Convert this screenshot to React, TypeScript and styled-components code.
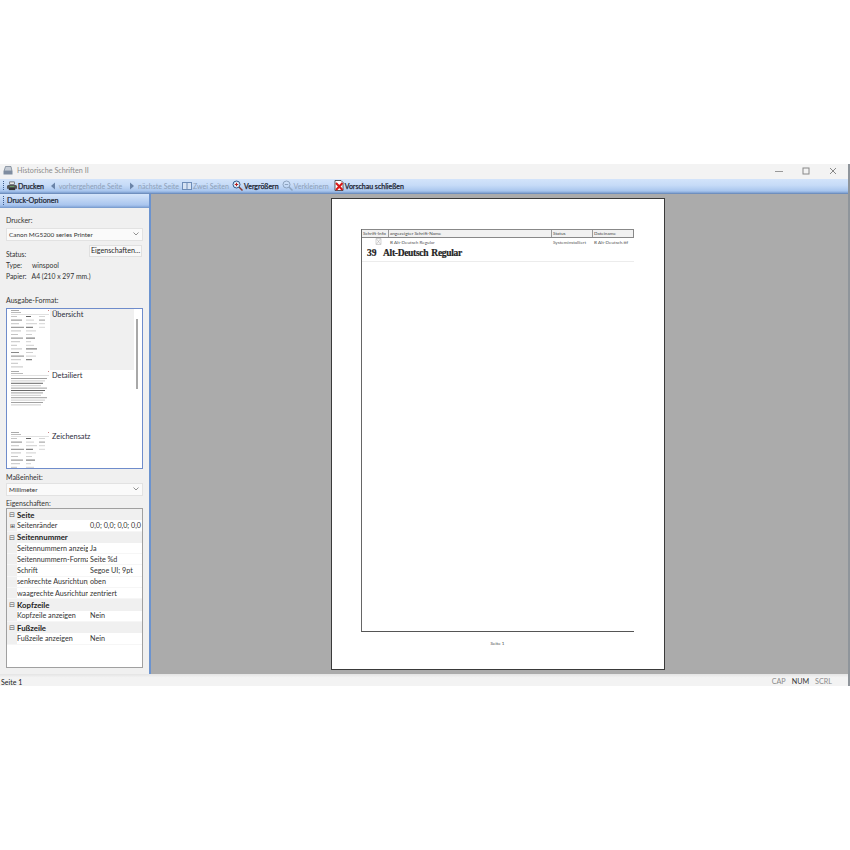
import { createGlobalStyle } from 'styled-components';
import styled from 'styled-components';

const GlobalStyle = createGlobalStyle`
  html, body {
    margin: 0;
    padding: 0;
    background: #fff;
  }
  body {
    font-family: Lato, 'Noto Sans', 'Liberation Sans', sans-serif;
    font-size: 7.2px;
    color: #2a2a2a;
  }
`;

const Page = styled.div`
  width: 850px;
  height: 850px;
  padding-top: 164px;
  box-sizing: border-box;
  background: #fff;
`;

const Window = styled.div`
  width: 850px;
  height: 522px;
  display: flex;
  flex-direction: column;
  border-right: 2px solid #8f959b;
  box-sizing: border-box;
  background: #f0f0f0;
`;

const TitleBar = styled.div`
  height: 15px;
  display: flex;
  align-items: center;
  padding: 0 2px 2px 3px;
  box-sizing: border-box;
  background: #f3f3f3;
  color: #8c8c8c;
  font-size: 7.2px;
`;

const TitleText = styled.span`
  margin-left: 4px;
  flex: 1;
`;

const WindowButton = styled.span`
  width: 27px;
  height: 13px;
  display: flex;
  align-items: center;
  justify-content: center;
`;

const Toolbar = styled.div`
  height: 15px;
  display: flex;
  align-items: center;
  padding: 0 0 0 3px;
  box-sizing: border-box;
  background: linear-gradient(#d3e4fa 0%, #c6dbf7 45%, #a9c6ee 85%, #7d9fd0 100%);
  border-bottom: 1px solid #6f8fbe;
`;

const Gripper = styled.span`
  width: 1px;
  height: 10px;
  margin-right: 3px;
  background: repeating-linear-gradient(#3f5f8f 0 1px, transparent 1px 2px);
  flex: none;
`;

const ToolButton = styled.span<{ $disabled?: boolean; $gap?: number }>`
  display: inline-flex;
  align-items: center;
  gap: 1px;
  margin-right: ${({ $gap }) => $gap ?? 3}px;
  color: ${({ $disabled }) => ($disabled ? '#8d9fb8' : '#1c2430')};
  font-size: 7px;
  -webkit-text-stroke: ${({ $disabled }) => ($disabled ? '0' : '0.25px')};
  white-space: nowrap;
`;

const Main = styled.div`
  height: 481px;
  display: flex;
`;

const Sidebar = styled.div`
  width: 149px;
  flex: none;
  display: flex;
  flex-direction: column;
  border-right: 2px solid #6b93cf;
  box-sizing: content-box;
`;

const SidebarHeader = styled.div`
  height: 14px;
  display: flex;
  align-items: center;
  padding: 1px 0 0 3px;
  box-sizing: border-box;
  background: linear-gradient(#d5e5fa, #a9c5ee 85%, #86a8da);
  border-bottom: 1px solid #7d9fd0;
  font-size: 7.2px;
  color: #1c2430;
  -webkit-text-stroke: 0.2px;
`;

const SidebarBody = styled.div`
  flex: 1;
  padding: 0 6px;
  display: flex;
  flex-direction: column;
  background: #f0f0f0;
`;

const FieldLabel = styled.div<{ $top: number }>`
  margin-top: ${({ $top }) => $top}px;
  height: 10px;
  line-height: 10px;
  font-size: 7px;
  color: #333;
`;

const Select = styled.div<{ $top: number }>`
  margin-top: ${({ $top }) => $top}px;
  height: 13px;
  display: flex;
  align-items: center;
  justify-content: space-between;
  padding: 0 3px 0 2px;
  background: #fafafa;
  border: 1px solid #e2e2e2;
  box-sizing: border-box;
  font-size: 6.4px;
  color: #333;
`;

const StatusBlock = styled.div`
  position: relative;
  height: 37px;
  margin-top: 3px;
`;

const PropertiesButton = styled.div`
  position: absolute;
  right: 1px;
  top: 1px;
  width: 53px;
  height: 12px;
  display: flex;
  align-items: center;
  justify-content: center;
  background: #f8f8f8;
  border: 1px solid #e0e0e0;
  box-sizing: border-box;
  font-size: 7.2px;
  white-space: nowrap;
`;

const InfoRow = styled.div<{ $top: number }>`
  position: absolute;
  left: 0;
  top: ${({ $top }) => $top}px;
  font-size: 6.8px;
  line-height: 10px;
  color: #333;
  white-space: nowrap;
`;

const InfoValue = styled.span`
  margin-left: 10px;
`;

const ListBox = styled.div`
  position: relative;
  height: 161px;
  margin-top: 3px;
  overflow: hidden;
  background: #fff;
  border: 1px solid #6f8ccb;
  box-sizing: border-box;
`;

const ListItem = styled.div`
  height: 61px;
  display: flex;
  align-items: flex-start;
  padding-left: 3px;
`;

const ListCaption = styled.div<{ $selected?: boolean }>`
  flex: 1;
  height: 100%;
  margin-right: 8px;
  padding-left: 2px;
  font-size: 7.4px;
  line-height: 12px;
  color: #2b2b3a;
  background: ${({ $selected }) => ($selected ? '#f0f0f0' : '#fff')};
`;

const ScrollThumb = styled.div`
  position: absolute;
  right: 4px;
  top: 10px;
  width: 2px;
  height: 70px;
  background: #a8a8a8;
`;

const PropertyGrid = styled.div`
  height: 160px;
  background: #fff;
  border: 1px solid #a0a0a0;
  box-sizing: border-box;
`;

const GroupRow = styled.div`
  height: 11.3px;
  display: flex;
  align-items: center;
  background: #f0f0f0;
  font-size: 7.8px;
  font-weight: 700;
  color: #222;
`;

const Toggle = styled.span`
  width: 10px;
  flex: none;
  text-align: center;
  font-size: 7px;
  font-weight: 400;
  line-height: 1;
  color: #555;
`;

const PropRow = styled.div`
  height: 11.3px;
  display: flex;
  align-items: center;
  font-size: 7.2px;
  color: #333;
  border-bottom: 1px solid #f6f6f6;
  box-sizing: border-box;
`;

const PropGutter = styled.span`
  width: 10px;
  height: 100%;
  flex: none;
  display: flex;
  align-items: center;
  justify-content: center;
  background: #f0f0f0;
  font-size: 6px;
`;

const PropName = styled.span`
  width: 71px;
  margin-right: 2px;
  flex: none;
  overflow: hidden;
  white-space: nowrap;
`;

const PropValue = styled.span`
  white-space: nowrap;
`;

const Preview = styled.div`
  flex: 1;
  display: flex;
  align-items: flex-start;
  padding: 4px 0 0 180px;
  background: #ababab;
`;

const Paper = styled.div`
  width: 334px;
  height: 472px;
  display: flex;
  flex-direction: column;
  padding: 30px 30px 0 29px;
  background: #fff;
  border: 1px solid #3a3a3a;
  box-sizing: border-box;
`;

const ReportFrame = styled.div`
  height: 403px;
  border-left: 1px solid #666;
  border-bottom: 1px solid #555;
  box-sizing: border-box;
`;

const ReportHead = styled.div`
  height: 9px;
  display: grid;
  grid-template-columns: 27px 163px 41px 42px;
  background: #f1f1f1;
  border: 1px solid #888;
  border-left: 0;
  box-sizing: border-box;
  font-size: 4.6px;
  line-height: 7px;
  color: #444;
`;

const HeadCell = styled.span`
  padding-left: 1px;
  border-right: 1px solid #999;
  white-space: nowrap;
  overflow: hidden;
  &:last-child {
    border-right: 0;
  }
`;

const ReportRow = styled.div`
  height: 8px;
  display: grid;
  grid-template-columns: 27px 163px 41px 42px;
  font-size: 4.6px;
  line-height: 8px;
  color: #555;
`;

const RowCell = styled.span`
  padding-left: 1px;
  white-space: nowrap;
  overflow: hidden;
`;

const IconCell = styled.span`
  display: flex;
  justify-content: flex-end;
  align-items: center;
  padding-right: 7px;
`;

const FontSample = styled.div`
  height: 15px;
  display: flex;
  align-items: center;
  padding-left: 5px;
  border-bottom: 1px solid #ececec;
  font-family: 'Liberation Serif', serif;
  font-weight: 700;
  font-size: 9.5px;
  color: #222;
  -webkit-text-stroke: 0.2px;
`;

const SampleNumber = styled.span`
  width: 16px;
  flex: none;
`;

const SampleName = styled.span`
  word-spacing: 1px;
  letter-spacing: -0.3px;
`;

const PageFooter = styled.div`
  margin-top: 7px;
  text-align: center;
  font-size: 4.6px;
  line-height: 8px;
  color: #444;
`;

const StatusBar = styled.div`
  flex: 1;
  display: flex;
  align-items: center;
  padding: 3px 16px 0 1px;
  background: linear-gradient(#e4e4e4, #f3f3f3 30%);
  font-size: 7px;
  color: #222;
`;

const StatusLabel = styled.span`
  flex: 1;
`;

const Indicator = styled.span<{ $on?: boolean }>`
  margin-left: 6px;
  font-size: 7.2px;
  color: ${({ $on }) => ($on ? '#333' : '#8a8a8a')};
`;

function PrinterIcon() {
  return (
    <svg width="10" height="10" viewBox="0 0 11 10">
      <rect x="3" y="0.5" width="5" height="3" fill="#e8e8e8" stroke="#444" strokeWidth="0.7" />
      <path d="M1 4 h9 l1 1 v3 h-11 v-3 z" fill="#555" />
      <rect x="2" y="7" width="7" height="2.5" fill="#333" />
      <rect x="3" y="5" width="5" height="1" fill="#6aa56a" />
    </svg>
  );
}

function Arrow({ left }: { left?: boolean }) {
  return (
    <svg width="6" height="8" viewBox="0 0 6 8">
      <path d={left ? 'M5 0.5 L1 4 L5 7.5 Z' : 'M1 0.5 L5 4 L1 7.5 Z'} fill="#6b84a8" />
    </svg>
  );
}

function TwoPagesIcon() {
  return (
    <svg width="10" height="8" viewBox="0 0 10 8">
      <rect width="10" height="8" fill="#6e8db8" />
      <rect x="1" y="1" width="3.5" height="6" fill="#d7e3f3" />
      <rect x="5.5" y="1" width="3.5" height="6" fill="#d7e3f3" />
    </svg>
  );
}

function Magnifier({ muted }: { muted?: boolean }) {
  const ring = muted ? '#8ea4bf' : '#2d5a8c';
  return (
    <svg width="11" height="11" viewBox="0 0 11 11">
      <circle cx="4.5" cy="4.5" r="3.5" fill={muted ? 'none' : '#dfeaf6'} stroke={ring} strokeWidth="1" />
      <path d="M7 7 L10.5 10.5" stroke={muted ? '#8ea4bf' : '#8a3a2a'} strokeWidth="1.5" />
      <path d="M2.8 4.5 H6.2" stroke={muted ? '#8ea4bf' : '#b32020'} strokeWidth="1" />
      {!muted && <path d="M4.5 2.8 V6.2" stroke="#b32020" strokeWidth="1" />}
    </svg>
  );
}

function CloseDocIcon() {
  return (
    <svg width="10" height="11" viewBox="0 0 10 11">
      <path d="M1 0.5 H7 L9 2.5 V10.5 H1 Z" fill="#fff" stroke="#333" strokeWidth="0.8" />
      <path d="M2 3 L8.5 10 M8.5 3 L2 10" stroke="#d81818" strokeWidth="2" />
    </svg>
  );
}

function Chevron() {
  return (
    <svg width="6" height="4" viewBox="0 0 6 4">
      <path d="M0.5 0.5 L3 3 L5.5 0.5" fill="none" stroke="#777" strokeWidth="0.8" />
    </svg>
  );
}

function AppIcon() {
  return (
    <svg width="10" height="9" viewBox="0 0 10 9">
      <path d="M2.5 0.5 H8 L9 5 H1 Z" fill="#c5ccd6" stroke="#6f7c8c" strokeWidth="0.7" />
      <rect x="0.5" y="5" width="9" height="3.5" fill="#7f8da0" />
    </svg>
  );
}

// page thumbnails in the format list: rows of grey text stubs
function ThumbTable({ rows }: { rows: number }) {
  const lines = [];
  for (let i = 0; i < rows; i++) {
    const y = 7 + i * 3.6;
    const dark = i % 5 === 1 || i % 7 === 3;
    lines.push(<rect key={`a${i}`} x="1" y={y} width={6 + ((i * 5) % 8)} height="1" fill={dark ? '#888' : '#c4c4c4'} />);
    if (i < rows - 2) {
      lines.push(<rect key={`b${i}`} x="16" y={y} width={5 + ((i * 3) % 7)} height="1" fill={i % 3 === 0 ? '#666' : '#cfcfcf'} />);
    }
    if (i < 4) {
      lines.push(<rect key={`c${i}`} x="29" y={y} width="6" height="1" fill={i === 1 ? '#999' : '#d5d5d5'} />);
    }
  }
  return (
    <svg width="40" height="60" viewBox="0 0 40 60">
      <rect x="1" y="1" width="8" height="1" fill="#aaa" />
      <rect x="1" y="3" width="10" height="1" fill="#bbb" />
      <rect x="1" y="5" width="38" height="0.6" fill="#ccc" />
      {lines}
      <rect x="38" y="1" width="1" height="1" fill="#c88" />
    </svg>
  );
}

function ThumbText() {
  const lines = [];
  for (let i = 0; i < 12; i++) {
    const dark = i === 2 || i === 5;
    lines.push(
      <rect key={i} x="1" y={8 + i * 2.4} width={36 - (i % 4) * 2} height="1" fill={dark ? '#666' : i % 2 ? '#ccc' : '#a0a0a0'} />
    );
  }
  return (
    <svg width="40" height="60" viewBox="0 0 40 60">
      <rect x="1" y="1" width="8" height="1" fill="#aaa" />
      <rect x="1" y="3" width="12" height="1" fill="#bbb" />
      <rect x="1" y="5" width="38" height="0.6" fill="#ccc" />
      {lines}
      <rect x="38" y="1" width="1" height="1" fill="#c88" />
    </svg>
  );
}

const propertyGroups = [
  { name: 'Seite', rows: [{ name: 'Seitenränder', value: '0,0; 0,0; 0,0; 0,0', expandable: true }] },
  {
    name: 'Seitennummer',
    rows: [
      { name: 'Seitennummern anzeigen', value: 'Ja' },
      { name: 'Seitennummern-Format', value: 'Seite %d' },
      { name: 'Schrift', value: 'Segoe UI; 9pt' },
      { name: 'senkrechte Ausrichtung', value: 'oben' },
      { name: 'waagrechte Ausrichtung', value: 'zentriert' },
    ],
  },
  { name: 'Kopfzeile', rows: [{ name: 'Kopfzeile anzeigen', value: 'Nein' }] },
  { name: 'Fußzeile', rows: [{ name: 'Fußzeile anzeigen', value: 'Nein' }] },
];

export default function App() {
  return (
    <Page>
      <GlobalStyle />
      <Window>
        <TitleBar>
          <AppIcon />
          <TitleText>Historische Schriften II</TitleText>
          <WindowButton>
            <svg width="8" height="8" viewBox="0 0 8 8"><path d="M0 4.5 H8" stroke="#999" /></svg>
          </WindowButton>
          <WindowButton>
            <svg width="8" height="8" viewBox="0 0 8 8"><rect x="1" y="1" width="6" height="6" fill="none" stroke="#888" /></svg>
          </WindowButton>
          <WindowButton>
            <svg width="8" height="8" viewBox="0 0 8 8"><path d="M1 1 L7 7 M7 1 L1 7" stroke="#888" /></svg>
          </WindowButton>
        </TitleBar>
        <Toolbar>
          <Gripper />
          <ToolButton $gap={6}><PrinterIcon />Drucken</ToolButton>
          <ToolButton $disabled $gap={7}><Arrow left />&nbsp;vorhergehende Seite</ToolButton>
          <ToolButton $disabled><Arrow />&nbsp;nächste Seite</ToolButton>
          <ToolButton $disabled><TwoPagesIcon />Zwei Seiten</ToolButton>
          <ToolButton><Magnifier />Vergrößern</ToolButton>
          <ToolButton $disabled $gap={5}><Magnifier muted />Verkleinern</ToolButton>
          <ToolButton><CloseDocIcon />Vorschau schließen</ToolButton>
        </Toolbar>
        <Main>
          <Sidebar>
            <SidebarHeader><Gripper />Druck-Optionen</SidebarHeader>
            <SidebarBody>
              <FieldLabel $top={7}>Drucker:</FieldLabel>
              <Select $top={3}>Canon MG5200 series Printer<Chevron /></Select>
              <StatusBlock>
                <PropertiesButton>Eigenschaften...</PropertiesButton>
                <InfoRow $top={5}>Status:</InfoRow>
                <InfoRow $top={16}>Type:<InfoValue>winspool</InfoValue></InfoRow>
                <InfoRow $top={27}>Papier:&nbsp;&nbsp;&nbsp;A4 (210 x 297 mm.)</InfoRow>
              </StatusBlock>
              <FieldLabel $top={14}>Ausgabe-Format:</FieldLabel>
              <ListBox>
                <ListItem>
                  <ThumbTable rows={15} />
                  <ListCaption $selected>Übersicht</ListCaption>
                </ListItem>
                <ListItem>
                  <ThumbText />
                  <ListCaption>Detailiert</ListCaption>
                </ListItem>
                <ListItem>
                  <ThumbTable rows={15} />
                  <ListCaption>Zeichensatz</ListCaption>
                </ListItem>
                <ScrollThumb />
              </ListBox>
              <FieldLabel $top={3}>Maßeinheit:</FieldLabel>
              <Select $top={1}>Millimeter<Chevron /></Select>
              <FieldLabel $top={2}>Eigenschaften:</FieldLabel>
              <PropertyGrid>
                {propertyGroups.map((group) => (
                  <div key={group.name}>
                    <GroupRow><Toggle>⊟</Toggle>{group.name}</GroupRow>
                    {group.rows.map((row) => (
                      <PropRow key={row.name}>
                        <PropGutter>{'expandable' in row ? '⊞' : ''}</PropGutter>
                        <PropName>{row.name}</PropName>
                        <PropValue>{row.value}</PropValue>
                      </PropRow>
                    ))}
                  </div>
                ))}
              </PropertyGrid>
            </SidebarBody>
          </Sidebar>
          <Preview>
            <Paper>
              <ReportFrame>
                <ReportHead>
                  <HeadCell>Schrift-Info</HeadCell>
                  <HeadCell>angezeigter Schrift-Name</HeadCell>
                  <HeadCell>Status</HeadCell>
                  <HeadCell>Dateiname</HeadCell>
                </ReportHead>
                <ReportRow>
                  <IconCell>
                    <svg width="7" height="7" viewBox="0 0 7 7">
                      <path d="M1 0.5 H6 V6.5 H1 Z M1.5 1 L5.5 6 M5.5 1 L1.5 6" fill="#fafafa" stroke="#aaa" strokeWidth="0.5" />
                    </svg>
                  </IconCell>
                  <RowCell>B Alt-Deutsch Regular</RowCell>
                  <RowCell>Systeminstalliert</RowCell>
                  <RowCell>B Alt-Deutsch.ttf</RowCell>
                </ReportRow>
                <FontSample>
                  <SampleNumber>39</SampleNumber>
                  <SampleName>Alt-Deutsch Regular</SampleName>
                </FontSample>
              </ReportFrame>
              <PageFooter>Seite 1</PageFooter>
            </Paper>
          </Preview>
        </Main>
        <StatusBar>
          <StatusLabel>Seite 1</StatusLabel>
          <Indicator>CAP</Indicator>
          <Indicator $on>NUM</Indicator>
          <Indicator>SCRL</Indicator>
        </StatusBar>
      </Window>
    </Page>
  );
}
